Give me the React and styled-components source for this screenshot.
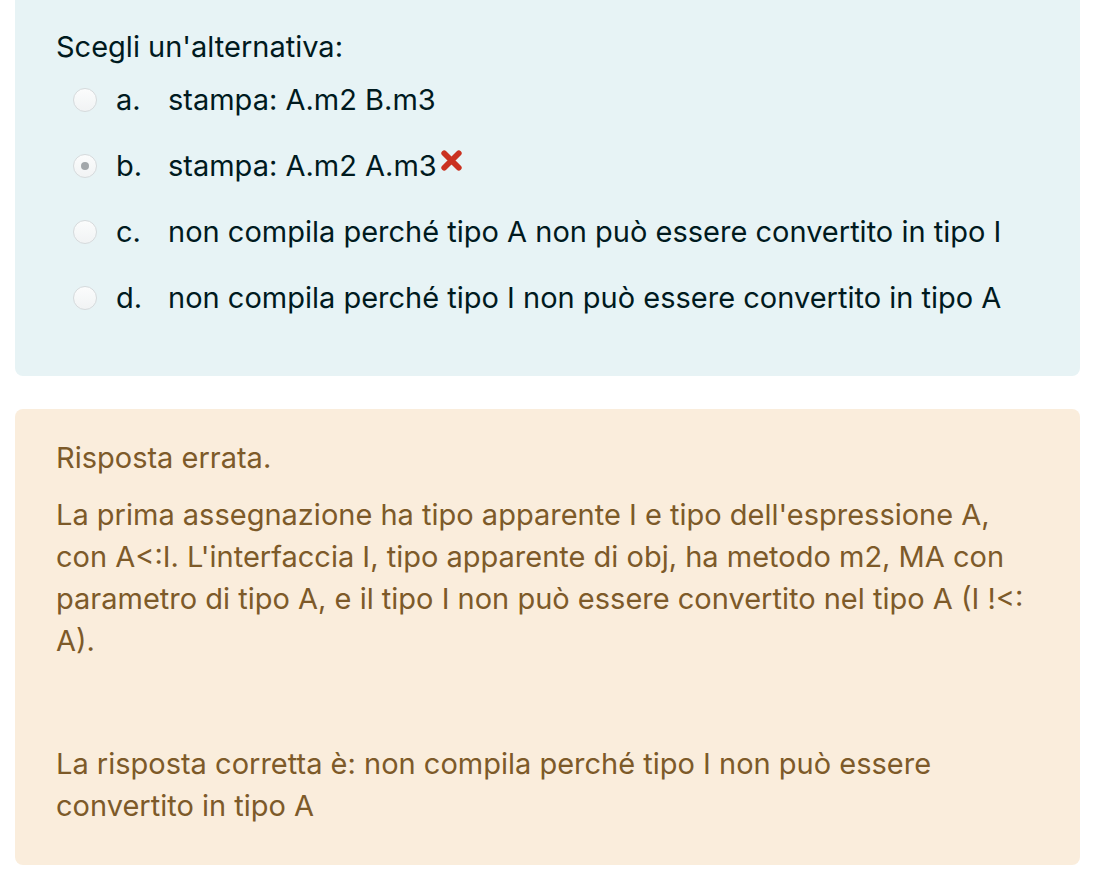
import React from 'react';
import styled, { createGlobalStyle } from 'styled-components';

const GlobalStyle = createGlobalStyle`
  html, body {
    margin: 0;
    padding: 0;
    background: #fff;
  }
  body {
    font-family: Inter, "Noto Sans", "Liberation Sans", sans-serif;
    font-size: 29px;
    line-height: 42px;
  }
`;

const answers = [
  { letter: 'a.', text: 'stampa: A.m2 B.m3' },
  { letter: 'b.', text: 'stampa: A.m2 A.m3', checked: true, wrong: true },
  { letter: 'c.', text: 'non compila perché tipo A non può essere convertito in tipo I' },
  { letter: 'd.', text: 'non compila perché tipo I non può essere convertito in tipo A' },
];

const App = () => {
  return (
    <Page>
      <GlobalStyle />
      <Formulation>
        <Prompt>Scegli un'alternativa:</Prompt>
        <AnswerList>
          {answers.map((a) => (
            <AnswerRow key={a.letter}>
              <Radio $checked={a.checked} />
              <Letter>{a.letter}</Letter>
              <AnswerText>
                {a.text}
                {a.wrong && <WrongIcon />}
              </AnswerText>
            </AnswerRow>
          ))}
        </AnswerList>
      </Formulation>
      <Outcome>
        <Feedback>Risposta errata.</Feedback>
        <Explanation>
          La prima assegnazione ha tipo apparente I e tipo dell'espressione A,
          con A&lt;:I. L'interfaccia I, tipo apparente di obj, ha metodo m2, MA con
          parametro di tipo A, e il tipo I non può essere convertito nel tipo A (I !&lt;:
          A).
        </Explanation>
        <RightAnswer>
          La risposta corretta è: non compila perché tipo I non può essere
          convertito in tipo A
        </RightAnswer>
      </Outcome>
    </Page>
  );
};

const WrongIcon = () => (
  <IconSvg viewBox="0 0 24 24" width="25" height="25">
    <path
      d="M5 5 L19 19 M19 5 L5 19"
      stroke="#ca3120"
      strokeWidth="5.5"
      strokeLinecap="round"
    />
  </IconSvg>
);

export default App;

const Page = styled.div`
  padding: 0 32px 16px 15px;
  display: flex;
  flex-direction: column;
  gap: 33px;
`;

const Formulation = styled.div`
  margin-top: -12px;
  background-color: #e7f3f5;
  color: #001a1e;
  border-radius: 8px;
  padding: 38px 41px 57px 41px;
`;

const Prompt = styled.div`
  margin-bottom: 11px;
`;

const AnswerList = styled.div`
  display: flex;
  flex-direction: column;
  gap: 24px;
  padding-left: 17px;
`;

const AnswerRow = styled.div`
  display: flex;
  align-items: center;
`;

const Radio = styled.span`
  width: 24px;
  height: 24px;
  box-sizing: border-box;
  border-radius: 50%;
  border: 1px solid #d6dadc;
  background: linear-gradient(#fbfcfc, #f1f3f4);
  margin-right: 19px;
  flex-shrink: 0;
  position: relative;
  &::after {
    content: '';
    display: ${(p) => (p.$checked ? 'block' : 'none')};
    position: absolute;
    left: 7px;
    top: 7px;
    width: 8px;
    height: 8px;
    border-radius: 50%;
    background: #a2a7aa;
  }
`;

const Letter = styled.span`
  width: 52px;
  flex-shrink: 0;
`;

const AnswerText = styled.span`
  display: inline-flex;
  align-items: center;
`;

const IconSvg = styled.svg`
  margin-left: 2px;
  margin-top: -12px;
`;

const Outcome = styled.div`
  background-color: #faeddc;
  color: #7d5a29;
  border-radius: 8px;
  padding: 28px 41px 38px 41px;
`;

const Feedback = styled.div`
  margin-bottom: 15px;
`;

const Explanation = styled.p`
  margin: 0 0 81px 0;
`;

const RightAnswer = styled.div``;
